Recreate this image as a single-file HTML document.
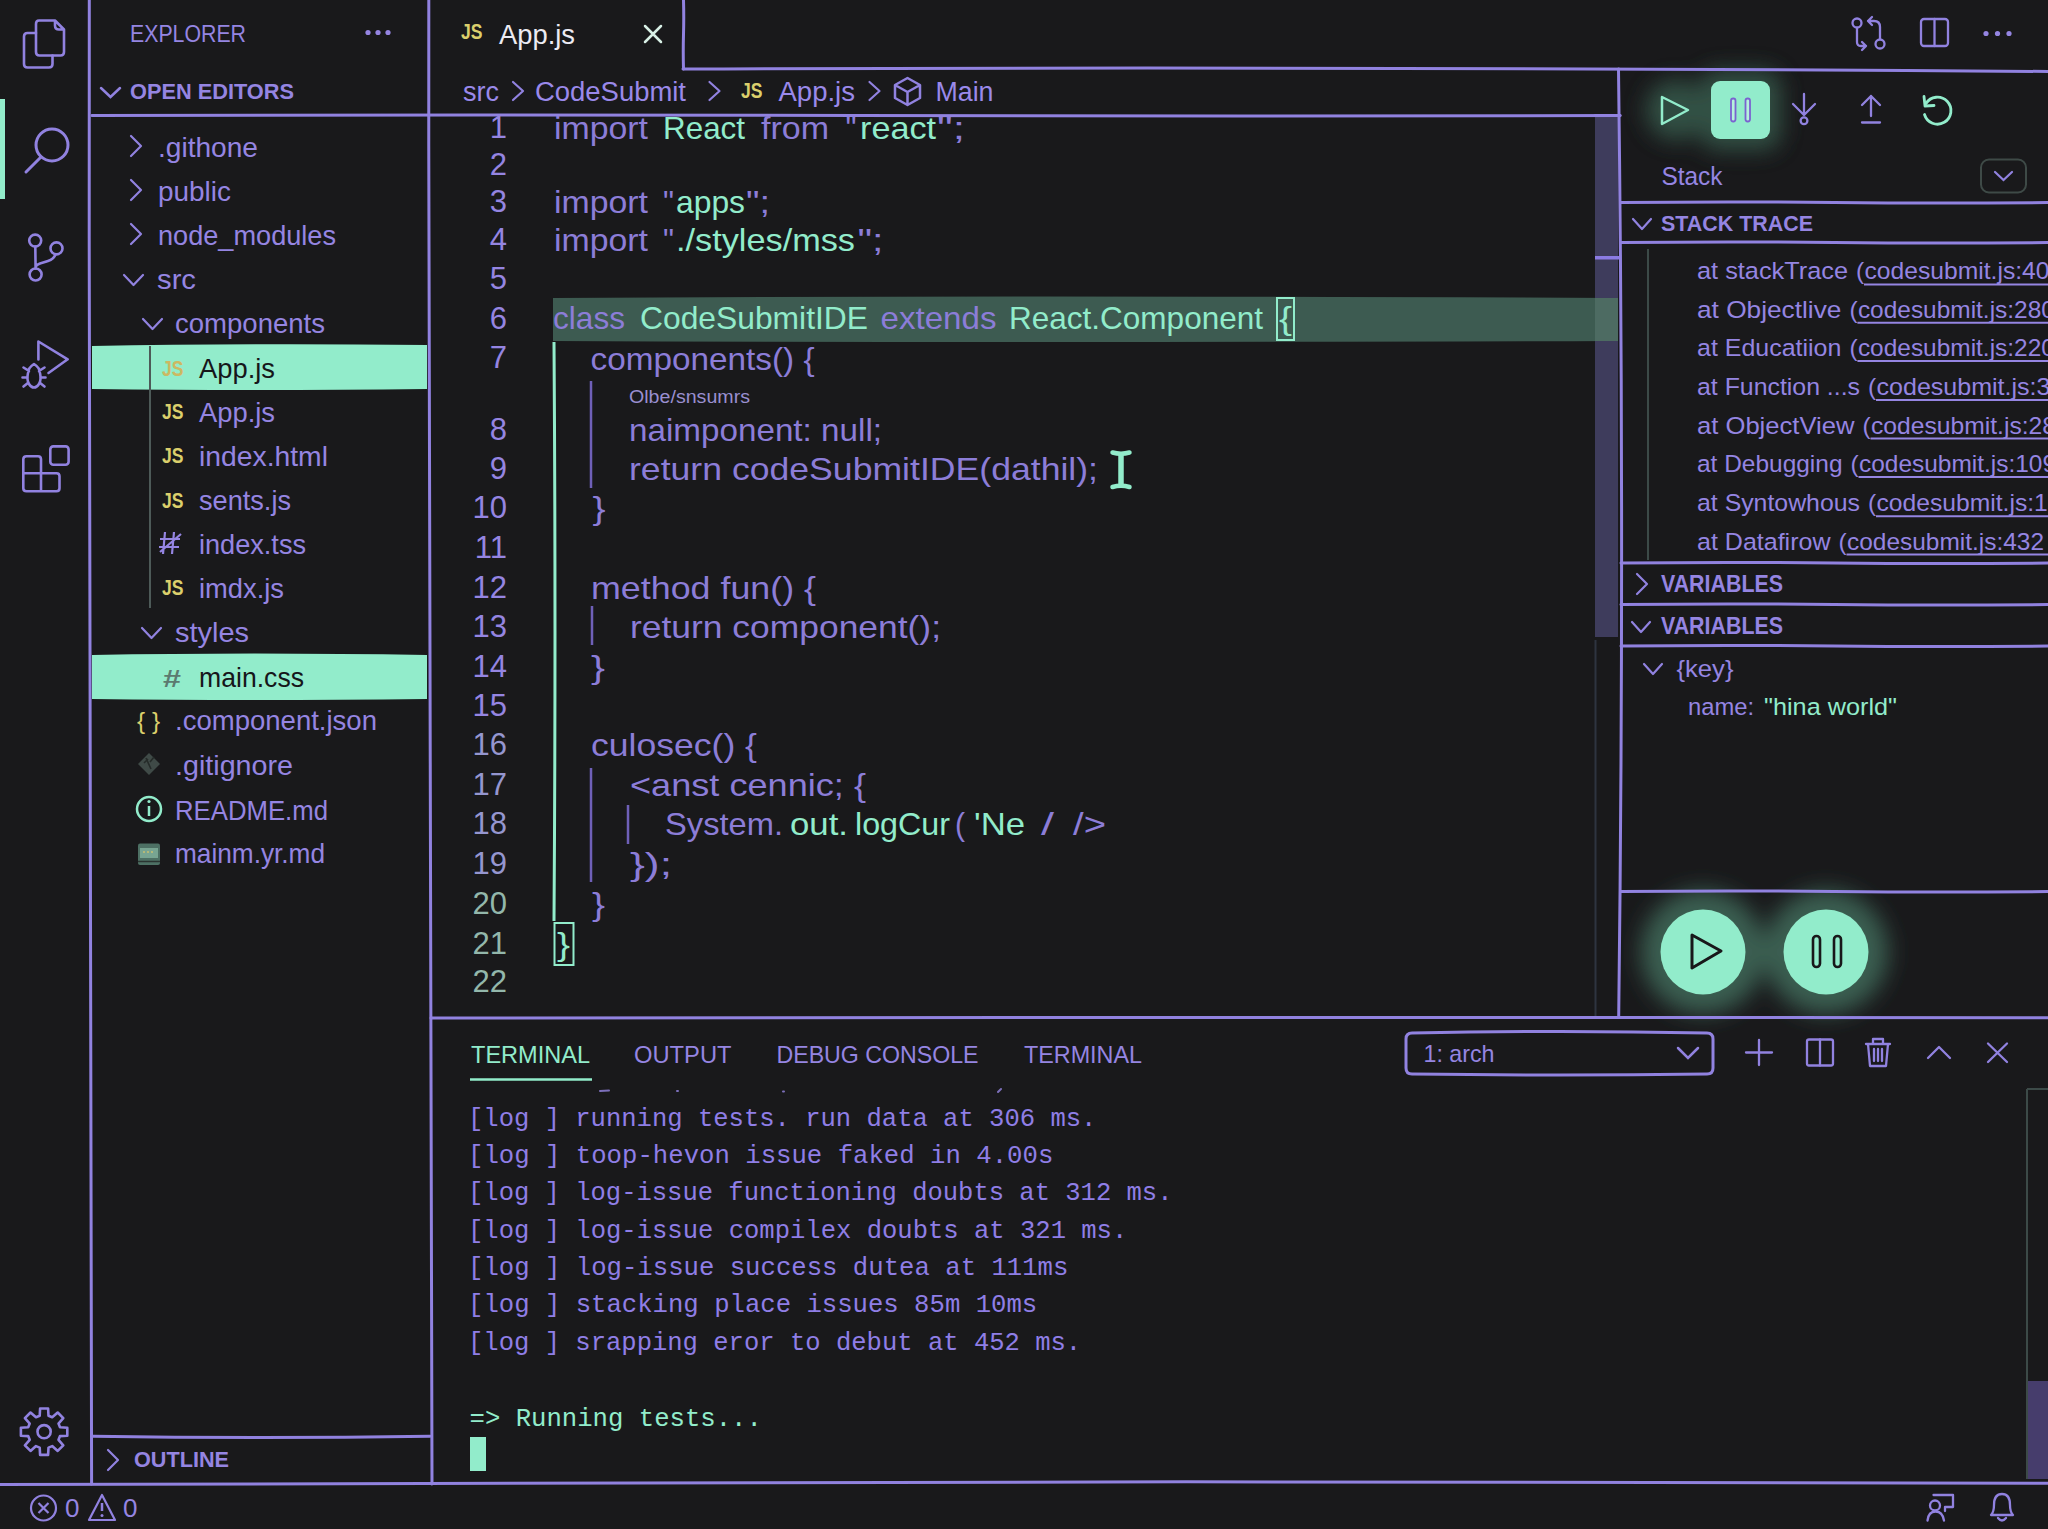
<!DOCTYPE html>
<html><head><meta charset="utf-8"><title>CodeSubmit IDE</title>
<style>
html,body{margin:0;padding:0;background:#19191b;width:2048px;height:1529px;overflow:hidden}
svg{position:absolute;left:0;top:0;display:block}
text{font-family:"Liberation Sans", sans-serif}
</style></head><body>
<svg width="2048" height="1529" viewBox="0 0 2048 1529">
<defs>
<radialGradient id="glow" cx="50%" cy="50%" r="50%">
<stop offset="0%" stop-color="#3a5d51" stop-opacity="1"/>
<stop offset="62%" stop-color="#335247" stop-opacity="1"/>
<stop offset="80%" stop-color="#2a4139" stop-opacity="0.75"/>
<stop offset="100%" stop-color="#1a1a1c" stop-opacity="0"/>
</radialGradient>
<radialGradient id="glow2" cx="50%" cy="50%" r="50%">
<stop offset="0%" stop-color="#30493f" stop-opacity="1"/>
<stop offset="55%" stop-color="#2b4139" stop-opacity="0.9"/>
<stop offset="100%" stop-color="#1a1a1c" stop-opacity="0"/>
</radialGradient>
<filter id="blur12" x="-50%" y="-50%" width="200%" height="200%"><feGaussianBlur stdDeviation="11"/></filter>
<filter id="blur9" x="-50%" y="-50%" width="200%" height="200%"><feGaussianBlur stdDeviation="9"/></filter>
</defs>
<rect x="0" y="0" width="2048" height="1529" fill="#19191b"/>

<path d="M92 346 Q250 343 427 345 L427 389 Q250 391 92 389 Z" fill="#92eccb"/>
<path d="M92 655 Q250 652 427 655 L427 699 Q250 701 92 699 Z" fill="#92eccb"/>
<path d="M553 298 Q1000 295 1617 298 L1617 341 Q1000 343 553 341 Z" fill="#3d5b51"/>
<rect x="1595" y="117" width="23" height="520" fill="#3e3c5c"/>
<rect x="1595" y="298" width="23" height="43" fill="#4d6b62"/>
<rect x="1595" y="256" width="25" height="3.5" fill="#8b7be3"/>
<rect x="2027" y="1381" width="21" height="98" fill="#463d6c"/>
<path d="M2027 1089 L2027 1479 M2027 1089 L2048 1089" stroke="#3c4a48" stroke-width="2" fill="none"/>
<g filter="url(#blur12)" opacity="0.9"><circle cx="1676" cy="110" r="30" fill="#35564a"/><rect x="1700" y="70" width="81" height="80" rx="18" fill="#35564a"/></g>
<g filter="url(#blur12)"><circle cx="1703" cy="952" r="62" fill="#3a5e51"/><circle cx="1826" cy="952" r="62" fill="#3a5e51"/></g>
<path d="M1595.5 640 L1595.5 1016" stroke="#2e3440" stroke-width="2"/>
<path d="M89.3 -2 Q88.75 741.0 91.6 1484" stroke="#9182e0" stroke-width="3" fill="none" stroke-linecap="round"/>
<path d="M428.8 -2 Q428.40 741.0 432 1484" stroke="#9182e0" stroke-width="3" fill="none" stroke-linecap="round"/>
<path d="M92 115.5 Q474.0 114.3 856.0 115.5 T1620 115.5" stroke="#9182e0" stroke-width="3" fill="none" stroke-linecap="round"/>
<path d="M1595 115.5 Q1601.25 115.5 1607.5 115.5 T1620 115.5" stroke="#9182e0" stroke-width="3" fill="none" stroke-linecap="round"/>
<path d="M431 115.5 L1620 115.5" stroke="#9182e0" stroke-width="0" fill="none"/>
<path d="M683.5 0 Q684.0 17.25 683.5 34.5 T683.5 69" stroke="#9182e0" stroke-width="3" fill="none" stroke-linecap="round"/>
<path d="M683 69 Q1366.5 66.35 2050 71.5" stroke="#9182e0" stroke-width="3" fill="none" stroke-linecap="round"/>
<path d="M1618.5 69 Q1624.60 543.0 1618.7 1017" stroke="#9182e0" stroke-width="3" fill="none" stroke-linecap="round"/>
<path d="M431 1018 Q1240.5 1016.95 2050 1017.7" stroke="#9182e0" stroke-width="3" fill="none" stroke-linecap="round"/>
<path d="M-2 1484.5 Q1024.0 1479.75 2050 1483.2" stroke="#9182e0" stroke-width="3" fill="none" stroke-linecap="round"/>
<path d="M93 1436.2 Q261.5 1438.80 430 1436.2" stroke="#9182e0" stroke-width="3" fill="none" stroke-linecap="round"/>
<path d="M1621 202.5 Q1727.75 201.3 1834.5 202.5 T2048 202.5" stroke="#9182e0" stroke-width="3" fill="none" stroke-linecap="round"/>
<path d="M1621 242.5 Q1727.75 241.3 1834.5 242.5 T2048 242.5" stroke="#9182e0" stroke-width="3" fill="none" stroke-linecap="round"/>
<path d="M1621 563 Q1727.75 561.8 1834.5 563 T2048 563" stroke="#9182e0" stroke-width="3" fill="none" stroke-linecap="round"/>
<path d="M1621 604.5 Q1727.75 603.3 1834.5 604.5 T2048 604.5" stroke="#9182e0" stroke-width="3" fill="none" stroke-linecap="round"/>
<path d="M1621 646 Q1727.75 644.8 1834.5 646 T2048 646" stroke="#9182e0" stroke-width="3" fill="none" stroke-linecap="round"/>
<path d="M1621 891.5 Q1727.75 890.3 1834.5 891.5 T2048 891.5" stroke="#9182e0" stroke-width="3" fill="none" stroke-linecap="round"/>
<path d="M150 346 L150 608" stroke="#4d5a58" stroke-width="2" fill="none"/>
<path d="M1648 249 L1648 560" stroke="#3c4a48" stroke-width="2" fill="none"/>
<path d="M554 342 Q556 630 554 921" stroke="#92eccb" stroke-width="3" fill="none"/>
<path d="M591 381 L591 488" stroke="#6f60b8" stroke-width="2.5" fill="none"/>
<path d="M592 606 L592 645" stroke="#6f60b8" stroke-width="2.5" fill="none"/>
<path d="M591 768 L591 882" stroke="#6f60b8" stroke-width="2.5" fill="none"/>
<path d="M628 805 L628 844" stroke="#6f60b8" stroke-width="2.5" fill="none"/>
<rect x="0" y="99" width="5" height="100" fill="#92eccb"/>
<path d="M39 20.5 L55 20.5 L64 29.5 L64 52 Q64 55.5 60.5 55.5 L39.5 55.5 Q36 55.5 36 52 L36 24 Q36 20.5 39 20.5 Z M55 20.5 L55 25.5 Q55 29.5 59 29.5 L64 29.5" stroke="#9182e0" stroke-width="2.6" fill="none" stroke-linecap="round" stroke-linejoin="round"/>
<path d="M36 33 L27.5 33 Q24 33 24 36.5 L24 64 Q24 67.5 27.5 67.5 L49 67.5 Q52.5 67.5 52.5 64 L52.5 55.5" stroke="#9182e0" stroke-width="2.6" fill="none" stroke-linecap="round" stroke-linejoin="round"/>
<circle cx="52" cy="145" r="16" stroke="#9182e0" stroke-width="3" fill="none" stroke-linecap="round" stroke-linejoin="round"/>
<path d="M41 157 L26 172" stroke="#9182e0" stroke-width="3" fill="none" stroke-linecap="round" stroke-linejoin="round"/>
<circle cx="35.2" cy="240.6" r="6" stroke="#9182e0" stroke-width="2.6" fill="none" stroke-linecap="round" stroke-linejoin="round"/><circle cx="35.6" cy="274.5" r="6" stroke="#9182e0" stroke-width="2.6" fill="none" stroke-linecap="round" stroke-linejoin="round"/><circle cx="56.5" cy="248.4" r="6" stroke="#9182e0" stroke-width="2.6" fill="none" stroke-linecap="round" stroke-linejoin="round"/>
<path d="M35.3 246.6 L35.6 268.5 M55.5 254.3 Q54 259 48 261 L40 263.5 Q36 265 35.6 267" stroke="#9182e0" stroke-width="2.6" fill="none" stroke-linecap="round" stroke-linejoin="round"/>
<path d="M38.4 359.5 L38.4 341.5 L67.7 359.3 L48.5 373" stroke="#9182e0" stroke-width="2.6" fill="none" stroke-linecap="round" stroke-linejoin="round"/>
<path d="M28.5 372 Q28 368 34 364 Q40 368 39.5 372 M28 373 Q26.5 380 29 384 Q31 387.5 34 387.5 Q37 387.5 39 384 Q41.5 380 40 373 M23.5 367.5 L29 371 M44.5 367.5 L39 371 M22.5 377.5 L27.5 377.5 M45.5 377.5 L40.5 377.5 M23.5 386.5 L28.5 382.5 M44.5 386.5 L39.5 382.5" stroke="#9182e0" stroke-width="2.6" fill="none" stroke-linecap="round" stroke-linejoin="round"/>
<rect x="50.3" y="446.4" width="18.3" height="18.4" rx="3" stroke="#9182e0" stroke-width="2.6" fill="none" stroke-linecap="round" stroke-linejoin="round"/>
<path d="M26.5 456.3 L38 456.3 Q41 456.3 41 459.3 L41 473.2 L56.5 473.2 Q59.5 473.2 59.5 476.2 L59.5 488.3 Q59.5 491.3 56.5 491.3 L26.5 491.3 Q23.3 491.3 23.3 488.3 L23.3 459.3 Q23.3 456.3 26.5 456.3 Z M23.3 473.2 L41 473.2 L41 491.3" stroke="#9182e0" stroke-width="2.6" fill="none" stroke-linecap="round" stroke-linejoin="round"/>
<path d="M60.0 1427.3 L67.3 1427.7 L67.3 1435.7 L60.0 1436.1 L58.5 1439.8 L63.3 1445.3 L57.7 1450.9 L52.2 1446.1 L48.5 1447.6 L48.1 1454.9 L40.1 1454.9 L39.7 1447.6 L36.0 1446.1 L30.5 1450.9 L24.9 1445.3 L29.7 1439.8 L28.2 1436.1 L20.9 1435.7 L20.9 1427.7 L28.2 1427.3 L29.7 1423.6 L24.9 1418.1 L30.5 1412.5 L36.0 1417.3 L39.7 1415.8 L40.1 1408.5 L48.1 1408.5 L48.5 1415.8 L52.2 1417.3 L57.7 1412.5 L63.3 1418.1 L58.5 1423.6 Z" stroke="#9182e0" stroke-width="2.6" fill="none" stroke-linecap="round" stroke-linejoin="round"/>
<circle cx="44.1" cy="1431.7" r="6.6" stroke="#9182e0" stroke-width="2.6" fill="none" stroke-linecap="round" stroke-linejoin="round"/>
<text x="130" y="41.5" font-size="24" fill="#9585e2" textLength="116" lengthAdjust="spacingAndGlyphs">EXPLORER</text>
<circle cx="368" cy="32.5" r="2.6" fill="#9585e2"/><circle cx="378" cy="32.5" r="2.6" fill="#9585e2"/><circle cx="388" cy="32.5" r="2.6" fill="#9585e2"/>
<path d="M101 88 L110.5 97 L120 88" stroke="#9182e0" stroke-width="2.5" fill="none" stroke-linecap="round"/>
<text x="130" y="99" font-size="22.5" fill="#9585e2" font-weight="bold" textLength="164" lengthAdjust="spacingAndGlyphs">OPEN EDITORS</text>
<path d="M131 136 L141 146 L131 156" stroke="#9182e0" stroke-width="2.2" fill="none" stroke-linecap="round" stroke-linejoin="round"/>
<text x="158" y="156.5" font-size="28" fill="#9585e2" textLength="100" lengthAdjust="spacingAndGlyphs">.githone</text>
<path d="M131 180 L141 190 L131 200" stroke="#9182e0" stroke-width="2.2" fill="none" stroke-linecap="round" stroke-linejoin="round"/>
<text x="158" y="200.5" font-size="28" fill="#9585e2" textLength="73" lengthAdjust="spacingAndGlyphs">public</text>
<path d="M131 224 L141 234 L131 244" stroke="#9182e0" stroke-width="2.2" fill="none" stroke-linecap="round" stroke-linejoin="round"/>
<text x="158" y="244.5" font-size="28" fill="#9585e2" textLength="178" lengthAdjust="spacingAndGlyphs">node_modules</text>
<path d="M124 275 L133.5 285 L143 275" stroke="#9182e0" stroke-width="2.2" fill="none" stroke-linecap="round" stroke-linejoin="round"/>
<text x="157" y="289" font-size="28" fill="#9585e2" textLength="39" lengthAdjust="spacingAndGlyphs">src</text>
<path d="M143 319 L152.5 329 L162 319" stroke="#9182e0" stroke-width="2.2" fill="none" stroke-linecap="round" stroke-linejoin="round"/>
<text x="175" y="333.2" font-size="28" fill="#9585e2" textLength="150" lengthAdjust="spacingAndGlyphs">components</text>
<text x="162" y="375.5" font-size="21.5" fill="#cdb862" font-weight="bold" textLength="21.5" lengthAdjust="spacingAndGlyphs">JS</text>
<text x="199" y="378" font-size="28" fill="#16161a" textLength="76" lengthAdjust="spacingAndGlyphs">App.js</text>
<text x="162" y="419.0" font-size="21.5" fill="#dbcf6c" font-weight="bold" textLength="21.5" lengthAdjust="spacingAndGlyphs">JS</text>
<text x="199" y="421.5" font-size="28" fill="#9585e2" textLength="76" lengthAdjust="spacingAndGlyphs">App.js</text>
<text x="162" y="463.3" font-size="21.5" fill="#dbcf6c" font-weight="bold" textLength="21.5" lengthAdjust="spacingAndGlyphs">JS</text>
<text x="199" y="465.8" font-size="28" fill="#9585e2" textLength="129" lengthAdjust="spacingAndGlyphs">index.html</text>
<text x="162" y="507.5" font-size="21.5" fill="#dbcf6c" font-weight="bold" textLength="21.5" lengthAdjust="spacingAndGlyphs">JS</text>
<text x="199" y="510" font-size="28" fill="#9585e2" textLength="92" lengthAdjust="spacingAndGlyphs">sents.js</text>
<path d="M165 532 L163 554 M174 532 L172 554 M160 539 L180 539 M159 547 L179 547 M160 552 L181 534" stroke="#9585e2" stroke-width="2.2" fill="none"/>
<text x="199" y="553.9" font-size="28" fill="#9585e2" textLength="107" lengthAdjust="spacingAndGlyphs">index.tss</text>
<text x="162" y="595.3" font-size="21.5" fill="#dbcf6c" font-weight="bold" textLength="21.5" lengthAdjust="spacingAndGlyphs">JS</text>
<text x="199" y="597.8" font-size="28" fill="#9585e2" textLength="85" lengthAdjust="spacingAndGlyphs">imdx.js</text>
<path d="M142 628 L151.5 638 L161 628" stroke="#9182e0" stroke-width="2.2" fill="none" stroke-linecap="round" stroke-linejoin="round"/>
<text x="175" y="642.2" font-size="28" fill="#9585e2" textLength="74" lengthAdjust="spacingAndGlyphs">styles</text>
<text x="163" y="686.6" font-size="24" fill="#5c7a70" font-weight="bold" textLength="18" lengthAdjust="spacingAndGlyphs">#</text>
<text x="199" y="686.6" font-size="28" fill="#16161a" textLength="105" lengthAdjust="spacingAndGlyphs">main.css</text>
<text x="137" y="729.3" font-size="24" fill="#dbcf6c" textLength="23" lengthAdjust="spacingAndGlyphs">{ }</text>
<text x="175" y="730.3" font-size="28" fill="#9585e2" textLength="202" lengthAdjust="spacingAndGlyphs">.component.json</text>
<path d="M149 753 L160 764 L149 775 L138 764 Z" fill="#3f4a47"/><path d="M146 758 L151 769 M150 762 L154 757 M144 763 L148 759" stroke="#252b29" stroke-width="1.6"/>
<text x="175" y="775.4" font-size="28" fill="#9585e2" textLength="118" lengthAdjust="spacingAndGlyphs">.gitignore</text>
<circle cx="149" cy="809" r="12" stroke="#92eccb" stroke-width="2.5" fill="none"/><path d="M149 806 L149 816" stroke="#92eccb" stroke-width="2.5"/><circle cx="149" cy="801.5" r="1.6" fill="#92eccb"/>
<text x="175" y="819.9" font-size="28" fill="#9585e2" textLength="153" lengthAdjust="spacingAndGlyphs">README.md</text>
<rect x="138" y="843.5" width="22" height="21.5" rx="2" fill="#4d7064"/><rect x="140" y="848" width="18" height="10" fill="#78a592"/><path d="M143 852 L155 852" stroke="#c8c070" stroke-width="1.4" stroke-dasharray="2 2"/><path d="M138 861.5 L160 861.5" stroke="#2a3431" stroke-width="1.5"/>
<text x="175" y="863" font-size="28" fill="#9585e2" textLength="150" lengthAdjust="spacingAndGlyphs">mainm.yr.md</text>
<path d="M108 1450 L118 1460 L108 1470" stroke="#9182e0" stroke-width="2.2" fill="none" stroke-linecap="round" stroke-linejoin="round"/>
<text x="134" y="1467" font-size="22.5" fill="#9585e2" font-weight="bold" textLength="95" lengthAdjust="spacingAndGlyphs">OUTLINE</text>
<text x="461" y="39.0" font-size="21.5" fill="#dbcf6c" font-weight="bold" textLength="21.5" lengthAdjust="spacingAndGlyphs">JS</text>
<text x="499" y="44" font-size="28" fill="#ecebf3" textLength="76" lengthAdjust="spacingAndGlyphs">App.js</text>
<path d="M645 26 L661 42 M661 26 L645 42" stroke="#d8f0e6" stroke-width="2.5" stroke-linecap="round"/>
<text x="463" y="100.8" font-size="27" fill="#9a89ea" textLength="36" lengthAdjust="spacingAndGlyphs">src</text>
<path d="M513 82 L523 91 L513 100" stroke="#9182e0" stroke-width="2.2" fill="none" stroke-linecap="round" stroke-linejoin="round"/>
<text x="535" y="100.8" font-size="27" fill="#9a89ea" textLength="151" lengthAdjust="spacingAndGlyphs">CodeSubmit</text>
<path d="M709.5 82 L719.5 91 L709.5 100" stroke="#9182e0" stroke-width="2.2" fill="none" stroke-linecap="round" stroke-linejoin="round"/>
<text x="741" y="97.5" font-size="21.5" fill="#dbcf6c" font-weight="bold" textLength="21.5" lengthAdjust="spacingAndGlyphs">JS</text>
<text x="778.5" y="100.8" font-size="27" fill="#9a89ea" textLength="76.5" lengthAdjust="spacingAndGlyphs">App.js</text>
<path d="M869.5 82 L879.5 91 L869.5 100" stroke="#9182e0" stroke-width="2.2" fill="none" stroke-linecap="round" stroke-linejoin="round"/>
<path d="M907.5 78 L920 85 L920 98 L907.5 105 L895 98 L895 85 Z M895 85 L907.5 92 L920 85 M907.5 92 L907.5 105" stroke="#9182e0" stroke-width="2.5" fill="none" stroke-linejoin="round"/>
<text x="935.5" y="100.8" font-size="27" fill="#9a89ea" textLength="58" lengthAdjust="spacingAndGlyphs">Main</text>
<text x="507" y="138.3" font-size="31" fill="#9585e2" text-anchor="end">1</text>
<text x="507" y="174.9" font-size="31" fill="#9585e2" text-anchor="end">2</text>
<text x="507" y="211.9" font-size="31" fill="#9585e2" text-anchor="end">3</text>
<text x="507" y="250.3" font-size="31" fill="#9585e2" text-anchor="end">4</text>
<text x="507" y="289.3" font-size="31" fill="#9585e2" text-anchor="end">5</text>
<text x="507" y="328.7" font-size="31" fill="#9585e2" text-anchor="end">6</text>
<text x="507" y="367.8" font-size="31" fill="#9585e2" text-anchor="end">7</text>
<text x="507" y="440.3" font-size="31" fill="#9585e2" text-anchor="end">8</text>
<text x="507" y="479.3" font-size="31" fill="#9585e2" text-anchor="end">9</text>
<text x="507" y="517.8" font-size="31" fill="#9585e2" text-anchor="end">10</text>
<text x="507" y="558.0" font-size="31" fill="#9585e2" text-anchor="end">11</text>
<text x="507" y="598.3" font-size="31" fill="#9585e2" text-anchor="end">12</text>
<text x="507" y="637.0999999999999" font-size="31" fill="#9585e2" text-anchor="end">13</text>
<text x="507" y="677.3" font-size="31" fill="#9585e2" text-anchor="end">14</text>
<text x="507" y="716.3" font-size="31" fill="#9585e2" text-anchor="end">15</text>
<text x="507" y="755.3" font-size="31" fill="#9596d0" text-anchor="end">16</text>
<text x="507" y="795.3" font-size="31" fill="#9596d0" text-anchor="end">17</text>
<text x="507" y="834.3" font-size="31" fill="#9596d0" text-anchor="end">18</text>
<text x="507" y="874.3" font-size="31" fill="#9596d0" text-anchor="end">19</text>
<text x="507" y="914.3" font-size="31" fill="#93b7ab" text-anchor="end">20</text>
<text x="507" y="953.8" font-size="31" fill="#93b7ab" text-anchor="end">21</text>
<text x="507" y="992.3" font-size="31" fill="#93b7ab" text-anchor="end">22</text>
<text x="554" y="139" font-size="32" fill="#8c7dd8" textLength="94" lengthAdjust="spacingAndGlyphs">import</text>
<text x="663" y="139" font-size="32" fill="#92eccb" textLength="82" lengthAdjust="spacingAndGlyphs">React</text>
<text x="761" y="139" font-size="32" fill="#8c7dd8" textLength="68" lengthAdjust="spacingAndGlyphs">from</text>
<text x="845.5" y="139" font-size="32" fill="#8c7dd8" textLength="11" lengthAdjust="spacingAndGlyphs">"</text>
<text x="860" y="139" font-size="32" fill="#92eccb" textLength="76" lengthAdjust="spacingAndGlyphs">react</text>
<text x="937" y="139" font-size="32" fill="#8c7dd8" textLength="28" lengthAdjust="spacingAndGlyphs">";</text>
<text x="554" y="212.6" font-size="32" fill="#8c7dd8" textLength="94" lengthAdjust="spacingAndGlyphs">import</text>
<text x="663" y="212.6" font-size="32" fill="#8c7dd8" textLength="11" lengthAdjust="spacingAndGlyphs">"</text>
<text x="676" y="212.6" font-size="32" fill="#92eccb" textLength="69" lengthAdjust="spacingAndGlyphs">apps</text>
<text x="746" y="212.6" font-size="32" fill="#8c7dd8" textLength="24" lengthAdjust="spacingAndGlyphs">";</text>
<text x="554" y="251" font-size="32" fill="#8c7dd8" textLength="94" lengthAdjust="spacingAndGlyphs">import</text>
<text x="663" y="251" font-size="32" fill="#8c7dd8" textLength="11" lengthAdjust="spacingAndGlyphs">"</text>
<text x="676" y="251" font-size="32" fill="#92eccb" textLength="179" lengthAdjust="spacingAndGlyphs">./styles/mss</text>
<text x="857.5" y="251" font-size="32" fill="#8c7dd8" textLength="26" lengthAdjust="spacingAndGlyphs">";</text>
<text x="553" y="329.4" font-size="32" fill="#8c7dd8" textLength="72" lengthAdjust="spacingAndGlyphs">class</text>
<text x="640" y="329.4" font-size="32" fill="#92eccb" textLength="228" lengthAdjust="spacingAndGlyphs">CodeSubmitIDE</text>
<text x="880.5" y="329.4" font-size="32" fill="#8c7dd8" textLength="116" lengthAdjust="spacingAndGlyphs">extends</text>
<text x="1009" y="329.4" font-size="32" fill="#92eccb" textLength="254" lengthAdjust="spacingAndGlyphs">React.Component</text>
<rect x="1277" y="298" width="17" height="42" stroke="#92eccb" stroke-width="2" fill="none"/>
<text x="1279" y="329.4" font-size="32" fill="#92eccb" textLength="13" lengthAdjust="spacingAndGlyphs">{</text>
<text x="590.5" y="370" font-size="32" fill="#8c7dd8" textLength="224" lengthAdjust="spacingAndGlyphs">components() {</text>
<text x="629" y="402.5" font-size="18" fill="#9a8fd0" textLength="121" lengthAdjust="spacingAndGlyphs">Olbe/snsumrs</text>
<text x="629" y="441" font-size="32" fill="#8c7dd8" textLength="253" lengthAdjust="spacingAndGlyphs">naimponent: null;</text>
<text x="629" y="480" font-size="32" fill="#8c7dd8" textLength="469" lengthAdjust="spacingAndGlyphs">return codeSubmitIDE(dathil);</text>
<path d="M1112.5 452.5 Q1121 455 1129.5 452.5 M1112.5 487 Q1121 484.5 1129.5 487" stroke="#92eccb" stroke-width="4.5" fill="none" stroke-linecap="round"/><path d="M1121 453 L1121 486" stroke="#92eccb" stroke-width="5.5"/>
<text x="592.5" y="518.5" font-size="32" fill="#8c7dd8" textLength="13" lengthAdjust="spacingAndGlyphs">}</text>
<text x="591" y="599" font-size="32" fill="#8c7dd8" textLength="225" lengthAdjust="spacingAndGlyphs">method fun() {</text>
<text x="630" y="637.8" font-size="32" fill="#8c7dd8" textLength="311" lengthAdjust="spacingAndGlyphs">return component();</text>
<text x="591" y="678" font-size="32" fill="#8c7dd8" textLength="14" lengthAdjust="spacingAndGlyphs">}</text>
<text x="591" y="756" font-size="32" fill="#8c7dd8" textLength="166" lengthAdjust="spacingAndGlyphs">culosec() {</text>
<text x="630" y="796" font-size="32" fill="#8c7dd8" textLength="236" lengthAdjust="spacingAndGlyphs">&lt;anst cennic; {</text>
<text x="665" y="835" font-size="32" fill="#8c7dd8" textLength="118" lengthAdjust="spacingAndGlyphs">System.</text>
<text x="790" y="835" font-size="32" fill="#92eccb" textLength="58" lengthAdjust="spacingAndGlyphs">out.</text>
<text x="855" y="835" font-size="32" fill="#92eccb" textLength="95" lengthAdjust="spacingAndGlyphs">logCur</text>
<text x="955" y="835" font-size="32" fill="#8c7dd8" textLength="10" lengthAdjust="spacingAndGlyphs">(</text>
<text x="974" y="835" font-size="32" fill="#92eccb" textLength="51" lengthAdjust="spacingAndGlyphs">'Ne</text>
<text x="1041" y="835" font-size="32" fill="#8c7dd8" textLength="13" lengthAdjust="spacingAndGlyphs">/</text>
<text x="1073" y="835" font-size="32" fill="#8c7dd8" textLength="33" lengthAdjust="spacingAndGlyphs">/&gt;</text>
<text x="630" y="875" font-size="32" fill="#8c7dd8" textLength="42" lengthAdjust="spacingAndGlyphs">});</text>
<text x="592" y="915" font-size="32" fill="#8c7dd8" textLength="13" lengthAdjust="spacingAndGlyphs">}</text>
<rect x="554.5" y="923" width="19" height="42" stroke="#92eccb" stroke-width="2" fill="none"/>
<text x="557" y="954.5" font-size="32" fill="#92eccb" textLength="13" lengthAdjust="spacingAndGlyphs">}</text>
<circle cx="1857" cy="23" r="4.5" stroke="#9182e0" stroke-width="2.3" fill="none" stroke-linecap="round" stroke-linejoin="round"/><path d="M1857 28 L1857 42 Q1857 46 1861 46 L1866 46 M1862 42 L1866 46 L1862 50" stroke="#9182e0" stroke-width="2.3" fill="none" stroke-linecap="round" stroke-linejoin="round"/>
<circle cx="1880" cy="44" r="4.5" stroke="#9182e0" stroke-width="2.3" fill="none" stroke-linecap="round" stroke-linejoin="round"/><path d="M1880 39 L1880 27 Q1880 21 1874 21 L1868 21 M1872 17 L1868 21 L1872 25" stroke="#9182e0" stroke-width="2.3" fill="none" stroke-linecap="round" stroke-linejoin="round"/>
<rect x="1921" y="19" width="27" height="27" rx="3" stroke="#9182e0" stroke-width="2.3" fill="none" stroke-linecap="round" stroke-linejoin="round"/><path d="M1934.5 19 L1934.5 46" stroke="#9182e0" stroke-width="2.3" fill="none" stroke-linecap="round" stroke-linejoin="round"/>
<circle cx="1986" cy="33.5" r="2.6" fill="#9585e2"/><circle cx="1997.5" cy="33.5" r="2.6" fill="#9585e2"/><circle cx="2009" cy="33.5" r="2.6" fill="#9585e2"/>
<path d="M1662 97 L1688 110 L1662 124 Z" stroke="#92eccb" stroke-width="2.5" fill="#2e4a40" stroke-linejoin="round"/>
<rect x="1711" y="81" width="59" height="58" rx="9" fill="#92eccb"/>
<rect x="1731" y="98.5" width="4.5" height="23" rx="2.2" stroke="#7a62d0" stroke-width="1.8" fill="#b5f2dc"/>
<rect x="1745.5" y="98.5" width="4.5" height="23" rx="2.2" stroke="#7a62d0" stroke-width="1.8" fill="#b5f2dc"/>
<path d="M1804 94 L1804 114 M1793 104 L1804 115 L1815 104" stroke="#9182e0" stroke-width="2.3" fill="none" stroke-linecap="round" stroke-linejoin="round"/><circle cx="1804" cy="120.8" r="3.4" stroke="#9182e0" stroke-width="2.3" fill="none" stroke-linecap="round" stroke-linejoin="round"/>
<path d="M1871 96 L1871 116 M1862 105 L1871 96 L1880 105 M1862 122.5 L1880 122.5" stroke="#9182e0" stroke-width="2.3" fill="none" stroke-linecap="round" stroke-linejoin="round"/>
<path d="M1926 103.5 A13.5 13.5 0 1 1 1924.5 114.5" stroke="#92eccb" stroke-width="2.8" fill="none" stroke-linecap="round"/><path d="M1924 96.5 L1925 106 L1934 105.5" stroke="#92eccb" stroke-width="2.8" fill="none" stroke-linecap="round" stroke-linejoin="round"/>
<text x="1661.5" y="184.5" font-size="25" fill="#9585e2" textLength="61" lengthAdjust="spacingAndGlyphs">Stack</text>
<rect x="1981" y="159.5" width="45" height="33" rx="8" stroke="#3e4a47" stroke-width="2" fill="none"/>
<path d="M1995 172 L2003.5 180 L2012 172" stroke="#9182e0" stroke-width="2.2" fill="none" stroke-linecap="round"/>
<path d="M1633 219 L1642.0 229 L1651 219" stroke="#9182e0" stroke-width="2.2" fill="none" stroke-linecap="round" stroke-linejoin="round"/>
<text x="1661" y="231" font-size="22.5" fill="#9585e2" font-weight="bold" textLength="152" lengthAdjust="spacingAndGlyphs">STACK TRACE</text>
<text x="1697" y="279.4" font-size="24.5" fill="#9585e2" textLength="151" lengthAdjust="spacingAndGlyphs">at stackTrace</text>
<text x="1856" y="279.4" font-size="24.5" fill="#9585e2">(</text>
<text x="1864.5" y="279.4" font-size="24.5" fill="#9585e2" textLength="185" lengthAdjust="spacingAndGlyphs">codesubmit.js:40</text>
<path d="M1864 284.4 L2048 284.4" stroke="#9585e2" stroke-width="2"/>
<text x="1697" y="317.7" font-size="24.5" fill="#9585e2" textLength="144.4000000000001" lengthAdjust="spacingAndGlyphs">at Objectlive</text>
<text x="1849.4" y="317.7" font-size="24.5" fill="#9585e2">(</text>
<text x="1857.9" y="317.7" font-size="24.5" fill="#9585e2" textLength="197" lengthAdjust="spacingAndGlyphs">codesubmit.js:280</text>
<path d="M1857.4 322.7 L2048 322.7" stroke="#9585e2" stroke-width="2"/>
<text x="1697" y="356" font-size="24.5" fill="#9585e2" textLength="144.4000000000001" lengthAdjust="spacingAndGlyphs">at Educatiion</text>
<text x="1849.4" y="356" font-size="24.5" fill="#9585e2">(</text>
<text x="1857.9" y="356" font-size="24.5" fill="#9585e2" textLength="197" lengthAdjust="spacingAndGlyphs">codesubmit.js:220</text>
<path d="M1857.4 361 L2048 361" stroke="#9585e2" stroke-width="2"/>
<text x="1697" y="395" font-size="24.5" fill="#9585e2" textLength="163" lengthAdjust="spacingAndGlyphs">at Function ...s</text>
<text x="1868" y="395" font-size="24.5" fill="#9585e2">(</text>
<text x="1876.5" y="395" font-size="24.5" fill="#9585e2" textLength="174" lengthAdjust="spacingAndGlyphs">codesubmit.js:3</text>
<path d="M1876 400 L2048 400" stroke="#9585e2" stroke-width="2"/>
<text x="1697" y="433.6" font-size="24.5" fill="#9585e2" textLength="157.5" lengthAdjust="spacingAndGlyphs">at ObjectView</text>
<text x="1862.5" y="433.6" font-size="24.5" fill="#9585e2">(</text>
<text x="1871.0" y="433.6" font-size="24.5" fill="#9585e2" textLength="185" lengthAdjust="spacingAndGlyphs">codesubmit.js:28</text>
<path d="M1870.5 438.6 L2048 438.6" stroke="#9585e2" stroke-width="2"/>
<text x="1697" y="471.9" font-size="24.5" fill="#9585e2" textLength="145.5" lengthAdjust="spacingAndGlyphs">at Debugging</text>
<text x="1850.5" y="471.9" font-size="24.5" fill="#9585e2">(</text>
<text x="1859.0" y="471.9" font-size="24.5" fill="#9585e2" textLength="197" lengthAdjust="spacingAndGlyphs">codesubmit.js:109</text>
<path d="M1858.5 476.9 L2048 476.9" stroke="#9585e2" stroke-width="2"/>
<text x="1697" y="511.3" font-size="24.5" fill="#9585e2" textLength="163" lengthAdjust="spacingAndGlyphs">at Syntowhous</text>
<text x="1868" y="511.3" font-size="24.5" fill="#9585e2">(</text>
<text x="1876.5" y="511.3" font-size="24.5" fill="#9585e2" textLength="185" lengthAdjust="spacingAndGlyphs">codesubmit.js:19</text>
<path d="M1876 516.3 L2048 516.3" stroke="#9585e2" stroke-width="2"/>
<text x="1697" y="549.6" font-size="24.5" fill="#9585e2" textLength="133.5" lengthAdjust="spacingAndGlyphs">at Datafirow</text>
<text x="1838.5" y="549.6" font-size="24.5" fill="#9585e2">(</text>
<text x="1847.0" y="549.6" font-size="24.5" fill="#9585e2" textLength="197" lengthAdjust="spacingAndGlyphs">codesubmit.js:432</text>
<path d="M1846.5 554.6 L2048 554.6" stroke="#9585e2" stroke-width="2"/>
<path d="M1637 574 L1647 584 L1637 594" stroke="#9182e0" stroke-width="2.2" fill="none" stroke-linecap="round" stroke-linejoin="round"/>
<text x="1661" y="592" font-size="23" fill="#9585e2" font-weight="bold" textLength="122" lengthAdjust="spacingAndGlyphs">VARIABLES</text>
<path d="M1632 622 L1641.0 632 L1650 622" stroke="#9182e0" stroke-width="2.2" fill="none" stroke-linecap="round" stroke-linejoin="round"/>
<text x="1661" y="634.3" font-size="23" fill="#9585e2" font-weight="bold" textLength="122" lengthAdjust="spacingAndGlyphs">VARIABLES</text>
<path d="M1644 664 L1653.0 674 L1662 664" stroke="#9182e0" stroke-width="2.2" fill="none" stroke-linecap="round" stroke-linejoin="round"/>
<text x="1676.5" y="677.3" font-size="24.5" fill="#9585e2" textLength="57" lengthAdjust="spacingAndGlyphs">{key}</text>
<text x="1688" y="715" font-size="24.5" fill="#9585e2" textLength="66" lengthAdjust="spacingAndGlyphs">name:</text>
<text x="1764" y="715" font-size="24.5" fill="#92eccb" textLength="133" lengthAdjust="spacingAndGlyphs">"hina world"</text>
<circle cx="1703" cy="952" r="42.5" fill="#92eccb"/>
<path d="M1692 935 L1721 951 L1692 968 Z" stroke="#18181a" stroke-width="3" fill="none" stroke-linejoin="round"/>
<circle cx="1826" cy="952" r="42.5" fill="#92eccb"/>
<rect x="1813" y="936" width="7" height="31" rx="3.5" stroke="#18181a" stroke-width="2.6" fill="none"/>
<rect x="1834" y="936" width="7" height="31" rx="3.5" stroke="#18181a" stroke-width="2.6" fill="none"/>
<text x="471" y="1063.3" font-size="24" fill="#92eccb" textLength="119" lengthAdjust="spacingAndGlyphs">TERMINAL</text>
<path d="M470 1079.5 L592 1079.5" stroke="#92eccb" stroke-width="2.5"/>
<text x="634" y="1063.3" font-size="24" fill="#9585e2" textLength="97.5" lengthAdjust="spacingAndGlyphs">OUTPUT</text>
<text x="776.5" y="1063.3" font-size="24" fill="#9585e2" textLength="202" lengthAdjust="spacingAndGlyphs">DEBUG CONSOLE</text>
<text x="1024" y="1063.3" font-size="24" fill="#9585e2" textLength="118" lengthAdjust="spacingAndGlyphs">TERMINAL</text>
<path d="M1412 1033 Q1560 1030 1707 1033 Q1713 1033 1713 1039 L1713 1068 Q1713 1074 1707 1074 Q1560 1076 1412 1074 Q1406 1074 1406 1068 L1406 1039 Q1406 1033 1412 1033 Z" stroke="#9182e0" stroke-width="3" fill="none"/>
<text x="1423.5" y="1062.3" font-size="24" fill="#9585e2" textLength="71" lengthAdjust="spacingAndGlyphs">1: arch</text>
<path d="M1678 1048 L1688 1058 L1698 1048" stroke="#9182e0" stroke-width="2.5" fill="none" stroke-linecap="round"/>
<path d="M1759 1040 L1759 1065 M1746 1052.5 L1772 1052.5" stroke="#9182e0" stroke-width="2.3" fill="none" stroke-linecap="round" stroke-linejoin="round"/>
<rect x="1807" y="1039.5" width="26" height="26" rx="2" stroke="#9182e0" stroke-width="2.3" fill="none" stroke-linecap="round" stroke-linejoin="round"/><path d="M1820 1039.5 L1820 1065.5" stroke="#9182e0" stroke-width="2.3" fill="none" stroke-linecap="round" stroke-linejoin="round"/>
<path d="M1866 1044 L1890 1044 M1873 1044 L1873 1039 L1883 1039 L1883 1044 M1868 1044 L1870 1066 L1886 1066 L1888 1044 M1874 1049 L1874 1061 M1878 1049 L1878 1061 M1882 1049 L1882 1061" stroke="#9182e0" stroke-width="2.3" fill="none" stroke-linecap="round" stroke-linejoin="round"/>
<path d="M1928 1058 L1939 1047 L1950 1058" stroke="#9182e0" stroke-width="2.3" fill="none" stroke-linecap="round" stroke-linejoin="round"/>
<path d="M1988 1043.5 L2007 1062 M2007 1043.5 L1988 1062" stroke="#9182e0" stroke-width="2.3" fill="none" stroke-linecap="round" stroke-linejoin="round"/>
<text x="468" y="1125.8" font-size="25.6" fill="#8f7ee6" style='font-family:"Liberation Mono", monospace' textLength="628.4" lengthAdjust="spacingAndGlyphs">[log ] running tests. run data at 306 ms.</text>
<text x="468" y="1162.7" font-size="25.6" fill="#8f7ee6" style='font-family:"Liberation Mono", monospace' textLength="585.3" lengthAdjust="spacingAndGlyphs">[log ] toop-hevon issue faked in 4.00s</text>
<text x="468" y="1199.8" font-size="25.6" fill="#8f7ee6" style='font-family:"Liberation Mono", monospace' textLength="704.5" lengthAdjust="spacingAndGlyphs">[log ] log-issue functioning doubts at 312 ms.</text>
<text x="468" y="1237.5" font-size="25.6" fill="#8f7ee6" style='font-family:"Liberation Mono", monospace' textLength="659.3" lengthAdjust="spacingAndGlyphs">[log ] log-issue compilex doubts at 321 ms.</text>
<text x="468" y="1274.8" font-size="25.6" fill="#8f7ee6" style='font-family:"Liberation Mono", monospace' textLength="600.4" lengthAdjust="spacingAndGlyphs">[log ] log-issue success dutea at 111ms</text>
<text x="468" y="1312.0" font-size="25.6" fill="#8f7ee6" style='font-family:"Liberation Mono", monospace' textLength="569.2" lengthAdjust="spacingAndGlyphs">[log ] stacking place issues 85m 10ms</text>
<text x="468" y="1349.6" font-size="25.6" fill="#8f7ee6" style='font-family:"Liberation Mono", monospace' textLength="613.2" lengthAdjust="spacingAndGlyphs">[log ] srapping eror to debut at 452 ms.</text>
<text x="469.5" y="1426.4" font-size="25.6" fill="#92eccb" style='font-family:"Liberation Mono", monospace' textLength="292.4" lengthAdjust="spacingAndGlyphs">=&gt; Running tests...</text>
<rect x="470" y="1437" width="16" height="34" fill="#92eccb"/>
<path d="M600 1091 L609 1090.5 M677 1091 L678 1091 M783 1091.5 L784 1091.5 M998 1092 L1001 1089" stroke="#9585e2" stroke-width="2" stroke-linecap="round" opacity="0.8"/>
<circle cx="43.5" cy="1508" r="12.5" stroke="#9182e0" stroke-width="2.2" fill="none"/><path d="M38.5 1503 L48.5 1513 M48.5 1503 L38.5 1513" stroke="#9182e0" stroke-width="2.2"/>
<text x="65" y="1517" font-size="26" fill="#9585e2">0</text>
<path d="M102 1495 L115 1520 L89 1520 Z" stroke="#9182e0" stroke-width="2.2" fill="none" stroke-linejoin="round"/><path d="M102 1503 L102 1511" stroke="#9182e0" stroke-width="2.5"/><circle cx="102" cy="1515.5" r="1.5" fill="#9182e0"/>
<text x="123" y="1517" font-size="26" fill="#9585e2">0</text>
<circle cx="1935" cy="1505.5" r="5" stroke="#9182e0" stroke-width="2.3" fill="none" stroke-linecap="round" stroke-linejoin="round"/><path d="M1927.5 1520.5 Q1928.5 1511.5 1935.5 1511.5 Q1942.5 1511.5 1944 1520.5" stroke="#9182e0" stroke-width="2.3" fill="none" stroke-linecap="round" stroke-linejoin="round"/><path d="M1933.5 1495 L1953 1495 L1953 1507 L1945 1507 L1945 1511" stroke="#9182e0" stroke-width="2.3" fill="none" stroke-linecap="round" stroke-linejoin="round"/>
<path d="M1991 1515 Q1994 1512 1994 1505 Q1994 1494 2002 1494 Q2010 1494 2010 1505 Q2010 1512 2013 1515 Z M1998 1518 Q2002 1523 2006 1518" stroke="#9182e0" stroke-width="2.3" fill="none" stroke-linecap="round" stroke-linejoin="round"/>
</svg></body></html>
